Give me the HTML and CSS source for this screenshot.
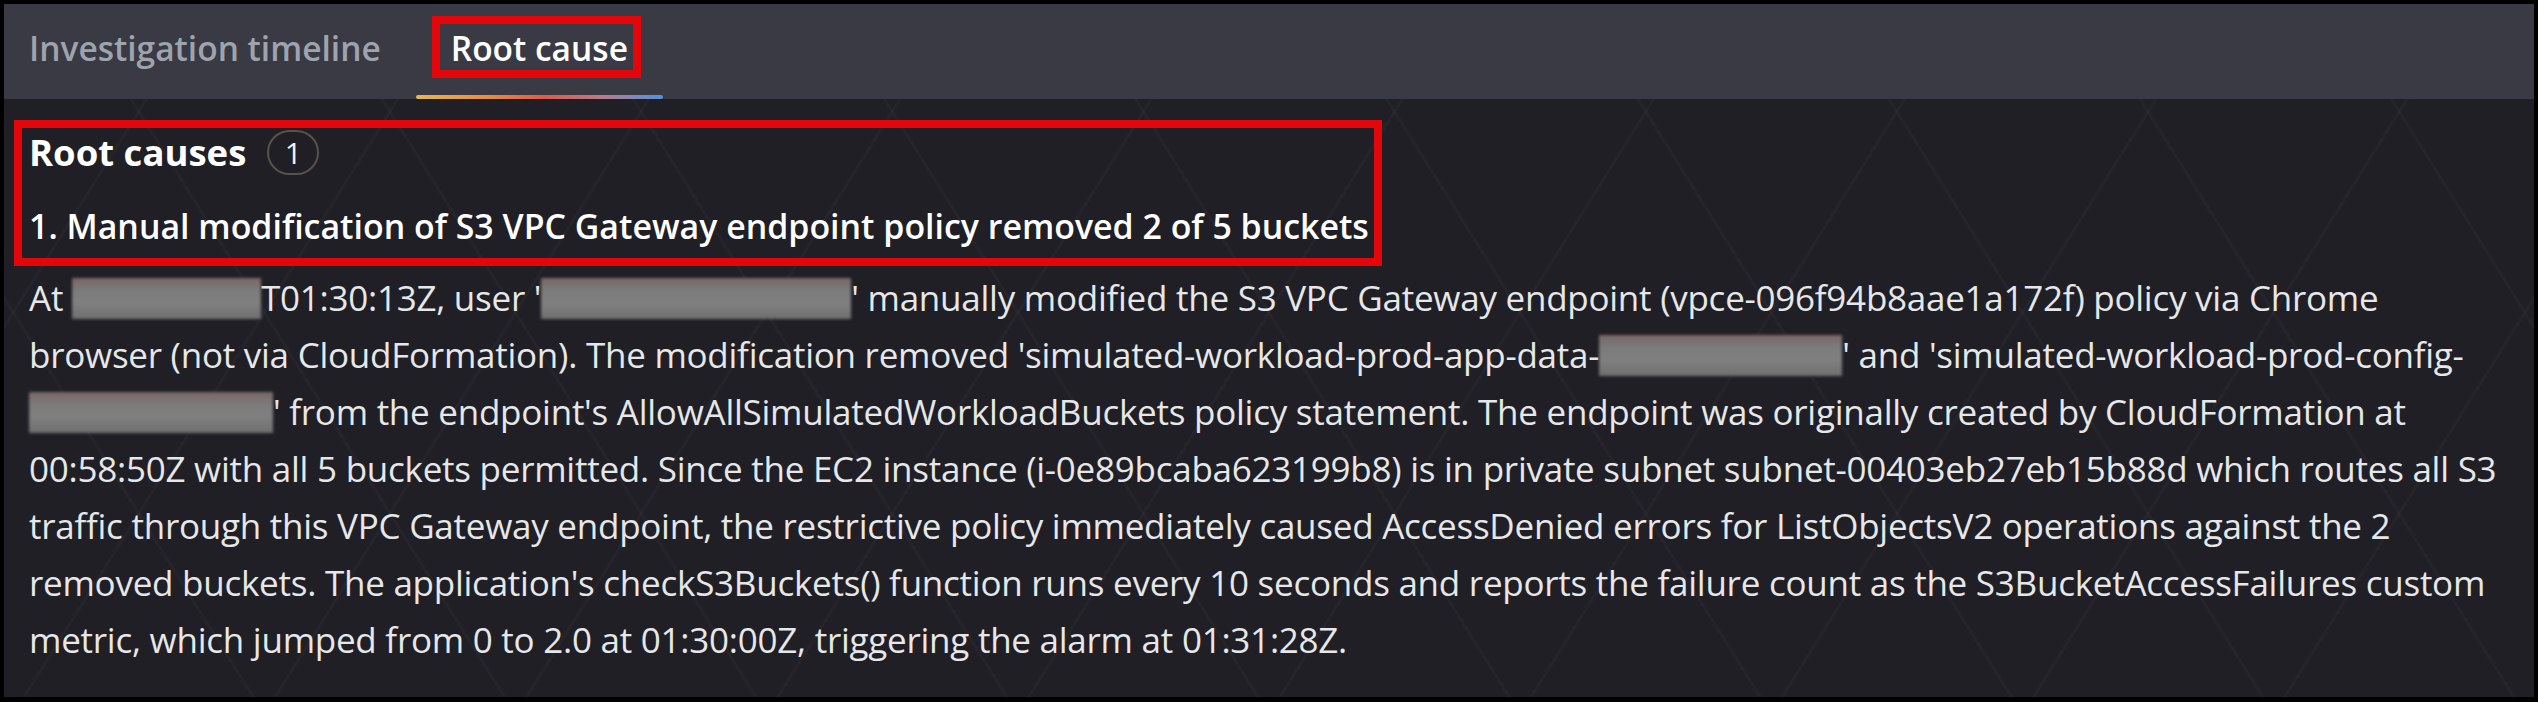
FILE: index.html
```html
<!DOCTYPE html>
<html lang="en">
<head>
<meta charset="utf-8">
<title>Root cause</title>
<link rel="stylesheet" href="styles.css">
</head>
<body>
<div class="frame">
  <div class="tabs">
    <div class="tab">Investigation timeline</div>
    <div class="tab active">Root cause</div>
  </div>
  <div class="content">
    <div class="heading-row">
      <h2 class="heading">Root causes</h2>
      <span class="counter">1</span>
    </div>
    <h3 class="cause-title">1. Manual modification of S3 VPC Gateway endpoint policy removed 2 of 5 buckets</h3>
    <p class="cause-text">At <span class="redact r-date"></span>T01:30:13Z, user '<span class="redact r-user"></span>' manually modified the S3 VPC Gateway endpoint (vpce-096f94b8aae1a172f) policy via Chrome<br>browser (not via CloudFormation). The modification removed 'simulated-workload-prod-app-data-<span class="redact r-bucket"></span>' and 'simulated-workload-prod-config-<br><span class="redact r-bucket2"></span>' from the endpoint's AllowAllSimulatedWorkloadBuckets policy statement. The endpoint was originally created by CloudFormation at<br>00:58:50Z with all 5 buckets permitted. Since the EC2 instance (i-0e89bcaba623199b8) is in private subnet subnet-00403eb27eb15b88d which routes all S3<br>traffic through this VPC Gateway endpoint, the restrictive policy immediately caused AccessDenied errors for ListObjectsV2 operations against the 2<br>removed buckets. The application's checkS3Buckets() function runs every 10 seconds and reports the failure count as the S3BucketAccessFailures custom<br>metric, which jumped from 0 to 2.0 at 01:30:00Z, triggering the alarm at 01:31:28Z.</p>
  </div>
  <div class="mark mark-tab"></div>
  <div class="mark mark-head"></div>
</div>
</body>
</html>
```

FILE: styles.css
```css
html, body {
  margin: 0;
  padding: 0;
  background: #000;
  width: 2538px;
  height: 702px;
  overflow: hidden;
}

.frame {
  position: relative;
  margin: 4px 4px 0 4px;
  height: 693px;
  display: flex;
  flex-direction: column;
  background-color: #1f1f25;
  font-family: "Open Sans", "Noto Sans", sans-serif;
  color: #e4e5e7;
  overflow: hidden;
}

.tabs {
  height: 95px;
  background: #393a44;
  display: flex;
  align-items: stretch;
  flex: none;
}

.tab {
  padding: 0 35px;
  display: flex;
  align-items: center;
  font-size: 33.5px;
  font-weight: 600;
  color: #9ea3ae;
  position: relative;
  padding-bottom: 8px;
}

.tab:first-child {
  padding-left: 25px;
}

.tab.active {
  color: #ffffff;
}

.tab.active::after {
  content: "";
  position: absolute;
  left: 0;
  right: 0;
  bottom: 0;
  height: 4px;
  border-radius: 2px;
  background: linear-gradient(90deg, #e7b94a 0%, #e98b3c 30%, #de5a4a 52%, #b97a8a 75%, #4f93e0 100%);
}

.content {
  flex: 1;
  padding: 29px 0 0 25px;
  background-color: #1f1f25;
  background-image:
    repeating-linear-gradient(58deg, transparent 0 210px, rgba(255,255,255,0.022) 210px 213px),
    repeating-linear-gradient(-58deg, transparent 0 210px, rgba(255,255,255,0.022) 210px 213px);
}

.heading-row {
  display: flex;
  align-items: center;
  gap: 21px;
  height: 49px;
}

.heading {
  margin: 0;
  font-size: 36.5px;
  line-height: 49px;
  font-weight: 700;
  color: #ffffff;
}

.counter {
  box-sizing: border-box;
  width: 52px;
  height: 45px;
  border: 2px solid #57524a;
  border-radius: 23px;
  display: flex;
  align-items: center;
  justify-content: center;
  font-size: 30px;
  color: #f2f2f2;
}

.cause-title {
  margin: 25px 0 0 0;
  font-size: 33.9px;
  line-height: 49px;
  font-weight: 600;
  color: #ffffff;
}

.cause-text {
  margin: 18px 0 0 0;
  font-size: 35px;
  line-height: 57px;
  font-weight: 400;
  letter-spacing: -0.25px;
  white-space: nowrap;
  color: #e6e7e9;
}

.redact {
  display: inline-block;
  height: 41px;
  vertical-align: -8px;
  background: linear-gradient(180deg, #7a6666 0%, #7b7b7b 30%, #808080 60%, #6f6f6f 100%);
  filter: blur(1.5px);
}

.r-date { width: 189px; }
.r-user { width: 310px; }
.r-bucket { width: 243px; }
.r-bucket2 { width: 244px; }

.mark {
  position: absolute;
  box-sizing: border-box;
  border: 8px solid #e3070b;
  pointer-events: none;
}

.mark-tab {
  left: 428px;
  top: 12px;
  width: 209px;
  height: 62px;
}

.mark-head {
  left: 10px;
  top: 116px;
  width: 1368px;
  height: 146px;
}
```
